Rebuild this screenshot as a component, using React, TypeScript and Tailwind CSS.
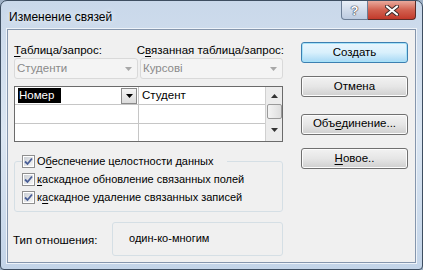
import React from 'react';

const font = { fontFamily: '"Liberation Sans", Arial, sans-serif' };

function U({ children }: { children: React.ReactNode }) {
  return <span className="underline underline-offset-2">{children}</span>;
}

function Check({ label }: { label: React.ReactNode }) {
  return (
    <div className="flex items-center gap-[2px] h-[16px]">
      <div className="w-[13px] h-[13px] border border-[#8f8f8f] bg-white p-[1px]">
        <div className="w-full h-full bg-gradient-to-br from-[#cbcfd5] to-[#f6f6f6] flex items-center justify-center">
          <svg width="9" height="9" viewBox="0 0 9 9">
            <path d="M1 4.5 L3.5 7 L8 1.5" fill="none" stroke="#4a5f97" strokeWidth="1.8" />
          </svg>
        </div>
      </div>
      <span className="text-[11px] text-black leading-[16px] whitespace-nowrap">{label}</span>
    </div>
  );
}

function Btn({ children, primary }: { children: React.ReactNode; primary?: boolean }) {
  return (
    <button
      className={`w-[107px] h-[21px] rounded-[3px] border text-[11.5px] leading-none text-black ${
        primary
          ? 'border-[#3c7fb1] bg-gradient-to-b from-[#eaf6fd] via-[#d9f0fc] to-[#a7d9f5] shadow-[inset_0_0_0_1px_#a6e2f8]'
          : 'border-[#707070] bg-gradient-to-b from-[#f2f2f2] via-[#e6e6e6] to-[#cfcfcf] shadow-[inset_0_0_0_1px_#fcfcfc]'
      }`}
    >
      {children}
    </button>
  );
}

function Combo({ text, w }: { text: string; w: string }) {
  return (
    <div className={`${w} h-[21px] rounded-[3px] border border-[#d9d9d9] bg-[#f4f4f4] flex items-center pl-[2px] pr-[5px]`}>
      <span className="text-[11.5px] text-[#8a8a8a] flex-1">{text}</span>
      <svg width="7" height="4" viewBox="0 0 7 4">
        <path d="M0 0 H7 L3.5 4 Z" fill="#a8a8a8" />
      </svg>
    </div>
  );
}

export default function App() {
  return (
    <div className="w-[423px] h-[270px] bg-[#9fb1c6]" style={font}>
      <div className="w-[423px] h-[270px] rounded-t-[7px] rounded-b-[4px] border border-[#3e4e61] bg-gradient-to-b from-[#c9d8ea] via-[#dbe6f2] to-[#c3d4e8] flex flex-col overflow-hidden">
        <div className="h-[28px] flex items-start">
          <div className="pl-[8px] pt-[7px] text-[12px] text-black [text-shadow:0_0_6px_#ffffff]">Изменение связей</div>
          <div className="ml-auto mr-[6px] flex">
            <div className="w-[27px] h-[19px] border border-[#6b7d95] border-t-0 rounded-bl-[4px] bg-gradient-to-b from-[#e9eff7] via-[#d2dceb] to-[#bccbe0] flex items-center justify-center">
              <span className="text-[13px] font-bold text-white leading-none [text-shadow:0_0_1px_#334,0_0_1px_#334,0_0_1px_#334]">?</span>
            </div>
            <div className="w-[48px] h-[19px] border border-[#5d2b26] border-t-0 border-l-0 rounded-br-[4px] bg-gradient-to-b from-[#e9a99c] via-[#d1604f] to-[#c2392a] flex items-center justify-center">
              <svg width="14" height="11" viewBox="0 0 14 11">
                <path d="M2 1.5 L12 9.5 M12 1.5 L2 9.5" stroke="#3a2a2a" strokeWidth="4" strokeLinecap="round" />
                <path d="M2 1.5 L12 9.5 M12 1.5 L2 9.5" stroke="#ffffff" strokeWidth="2.2" strokeLinecap="round" />
              </svg>
            </div>
          </div>
        </div>

        <div className="mx-[6px] h-[234px] border border-[#8596ad] bg-[#f0f0f0] flex shadow-[0_0_0_1px_#eef3f9]">
          <div className="w-[276px] pl-[6px] flex flex-col">
            <div className="flex pt-[12px] h-[28px] text-[11.5px] leading-[16px] text-black whitespace-nowrap">
              <div className="w-[126px]"><U>Т</U>аблица/запрос:</div>
              <div className="pl-[3px]">С<U>в</U>язанная таблица/запрос:</div>
            </div>
            <div className="flex gap-[2px]">
              <Combo text="Студенти" w="w-[124px]" />
              <Combo text="Курсові" w="w-[143px]" />
            </div>

            <div className="mt-[7px] w-[269px] h-[56px] border border-[#6b6b6b] bg-white flex">
              <div className="flex-1 flex flex-col">
                <div className="h-[18px] flex border-b border-[#c6c6c6]">
                  <div className="w-[124px] border-r border-[#c6c6c6] flex items-center pl-[3px] pr-[1px]">
                    <span className="bg-black text-white text-[11.5px] leading-[15px] px-[1px] w-[43px]">Номер</span>
                    <div className="ml-auto w-[16px] h-[16px] border border-[#8a8a8a] bg-gradient-to-b from-[#f4f4f4] to-[#dcdcdc] flex items-center justify-center">
                      <svg width="7" height="4" viewBox="0 0 7 4"><path d="M0 0 H7 L3.5 4 Z" fill="#000" /></svg>
                    </div>
                  </div>
                  <div className="flex-1 flex items-center pl-[3px] text-[11.5px] text-black">Студент</div>
                </div>
                <div className="h-[19px] flex border-b border-[#c6c6c6]">
                  <div className="w-[124px] border-r border-[#c6c6c6]" />
                </div>
                <div className="flex-1 flex">
                  <div className="w-[124px] border-r border-[#c6c6c6]" />
                </div>
              </div>
              <div className="w-[17px] border-l border-[#d0d0d0] bg-[#ececec] flex flex-col items-center">
                <div className="h-[17px] flex items-center justify-center">
                  <svg width="7" height="4" viewBox="0 0 7 4"><path d="M0 4 H7 L3.5 0 Z" fill="#333" /></svg>
                </div>
                <div className="w-[15px] h-[15px] rounded-[2px] border border-[#9a9a9a] bg-gradient-to-r from-[#f4f4f4] to-[#dedede]" />
                <div className="flex-1 flex items-center justify-center">
                  <svg width="7" height="4" viewBox="0 0 7 4"><path d="M0 0 H7 L3.5 4 Z" fill="#333" /></svg>
                </div>
              </div>
            </div>

            <fieldset className="mt-[11px] w-[269px] h-[59px] border border-[#d5dfe5] rounded-[3px] pl-[7px]">
              <legend className="ml-0 pr-[14px]">
                <Check label={<>О<U>б</U>еспечение целостности данных</>} />
              </legend>
              <div className="flex flex-col gap-[2px] pt-[2px]">
                <Check label={<><U>к</U>аскадное обновление связанных полей</>} />
                <Check label={<>к<U>а</U>скадное удаление связанных записей</>} />
              </div>
            </fieldset>

            <div className="mt-[10px] flex items-center">
              <div className="w-[99px] -ml-[1px] pt-[4px] text-[11.5px] text-black">Тип отношения:</div>
              <div className="w-[171px] h-[34px] border border-[#d5dfe5] rounded-[3px] flex items-center pl-[16px] pb-[2px] text-[11px] text-black">
                один-ко-многим
              </div>
            </div>
          </div>

          <div className="pl-[17px] pt-[12px] flex flex-col">
            <Btn primary>Создать</Btn>
            <div className="mt-[10px]"><Btn>Отмена</Btn></div>
            <div className="mt-[13px]"><Btn>Объ<U>е</U>динение...</Btn></div>
            <div className="mt-[10px]"><Btn><U>Н</U>овое..</Btn></div>
          </div>
        </div>
      </div>
    </div>
  );
}
